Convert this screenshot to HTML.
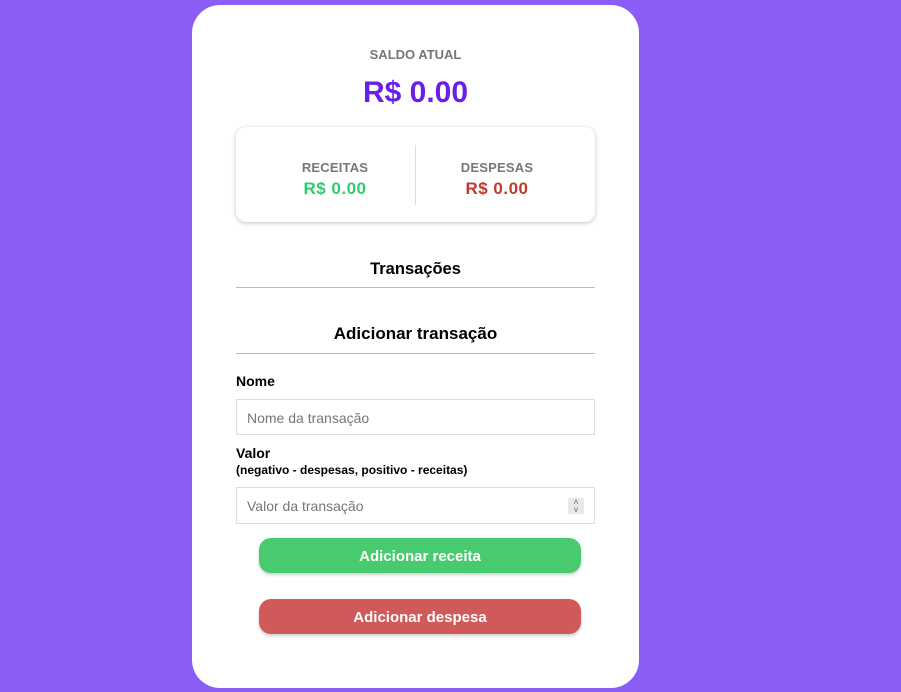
<!DOCTYPE html>
<html><head><meta charset="utf-8"><style>
*{box-sizing:border-box;margin:0;padding:0}
body{width:901px;height:692px;background:#8b5cf6;font-family:"Liberation Sans",Arial,sans-serif;position:relative;overflow:hidden}
.card{position:absolute;left:192px;top:5px;width:447px;height:683px;background:#fff;border-radius:28px}
.a{position:absolute;left:0;width:100%;text-align:center}
.sum{position:absolute;left:44px;top:122px;width:359px;height:95px;border-radius:10px;box-shadow:0 1px 4px rgba(0,0,0,.25);background:#fff}
.div{position:absolute;left:179px;top:18px;width:1px;height:60px;background:#ddd}
.hr{position:absolute;left:44px;width:359px;height:1px;background:#bbb}
.lbl{position:absolute;left:44px;font-weight:bold;color:#000}
.inp{position:absolute;left:44px;width:359px;height:36px;border:1px solid #ddd;font-size:14px;color:#777;padding:10px 0 0 10px}
.btn{position:absolute;left:67px;width:322px;height:35px;border-radius:12px;color:#fff;font-weight:bold;font-size:15px;text-align:center;line-height:37px;box-shadow:0 2px 3px rgba(0,0,0,.2)}
.c{position:absolute;width:200px;text-align:center;font-weight:bold}
</style></head><body>
<div class="card">
<div class="a" style="top:42px;font-size:13px;font-weight:bold;color:#777">SALDO ATUAL</div>
<div class="a" style="top:71px;font-size:30px;font-weight:bold;color:#6a1fe8">R$ 0.00</div>
<div class="sum">
<div class="c" style="left:-1px;top:33px;font-size:13px;color:#777;letter-spacing:.2px">RECEITAS</div>
<div class="c" style="left:-1px;top:52px;font-size:17px;color:#2ecc71;letter-spacing:.5px">R$ 0.00</div>
<div class="div"></div>
<div class="c" style="left:161px;top:33px;font-size:13px;color:#777;letter-spacing:.2px">DESPESAS</div>
<div class="c" style="left:161px;top:52px;font-size:17px;color:#c0392b;letter-spacing:.5px">R$ 0.00</div>
</div>
<div class="a" style="top:255px;font-size:16.5px;font-weight:bold">Transações</div>
<div class="hr" style="top:282px"></div>
<div class="a" style="top:319px;font-size:17px;font-weight:bold">Adicionar transação</div>
<div class="hr" style="top:348px"></div>
<div class="lbl" style="top:368px;font-size:14px">Nome</div>
<div class="inp" style="top:394px">Nome da transação</div>
<div class="lbl" style="top:440px;font-size:14px">Valor</div>
<div class="lbl" style="top:458px;font-size:12px">(negativo - despesas, positivo - receitas)</div>
<div class="inp" style="top:482px;height:37px">Valor da transação<span style="position:absolute;right:10px;top:10px;width:16px;height:16px;background:#e8e8ec;font-size:9px;line-height:8px;text-align:center;color:#666">˄<br>˅</span></div>
<div class="btn" style="top:533px;background:#47cb6e">Adicionar receita</div>
<div class="btn" style="top:594px;background:#d05a5a">Adicionar despesa</div>
</div>
</body></html>
